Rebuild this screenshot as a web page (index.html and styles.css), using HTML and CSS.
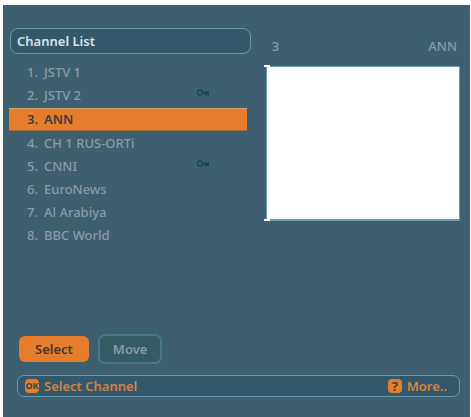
FILE: index.html
```
<!DOCTYPE html>
<html lang="en">
<head>
    <meta charset="UTF-8">
    <meta name="viewport" content="width=device-width, initial-scale=1.0">
    <title>Channel List</title>
    <link rel="stylesheet" href="styles.css">
</head>
<body>
    <div class="screen">
        <main class="content">
            <section class="channels">
                <h1 class="title">Channel List</h1>
                <ul class="channel-list">
                    <li class="channel"><span class="number">1.</span>JSTV 1</li>
                    <li class="channel"><span class="number">2.</span>JSTV 2
                        <svg class="key" viewBox="0 0 12 8" role="img" aria-label="Locked">
                            <rect x="1" y="1" width="4" height="5" rx="1" fill="none" stroke="currentColor" stroke-width="1.5"/>
                            <path d="M5.5 2.5H12V6.5H10.5V5.5H9.5V6.5H8V4.8H5.5Z" fill="currentColor"/>
                        </svg>
                    </li>
                    <li class="channel selected"><span class="number">3.</span>ANN</li>
                    <li class="channel"><span class="number">4.</span>CH 1 RUS-ORTi</li>
                    <li class="channel"><span class="number">5.</span>CNNI
                        <svg class="key" viewBox="0 0 12 8" role="img" aria-label="Locked">
                            <rect x="1" y="1" width="4" height="5" rx="1" fill="none" stroke="currentColor" stroke-width="1.5"/>
                            <path d="M5.5 2.5H12V6.5H10.5V5.5H9.5V6.5H8V4.8H5.5Z" fill="currentColor"/>
                        </svg>
                    </li>
                    <li class="channel"><span class="number">6.</span>EuroNews</li>
                    <li class="channel"><span class="number">7.</span>Al Arabiya</li>
                    <li class="channel"><span class="number">8.</span>BBC World</li>
                </ul>
            </section>
            <section class="preview">
                <div class="preview-info">
                    <span>3</span>
                    <span>ANN</span>
                </div>
                <div class="preview-picture"></div>
            </section>
        </main>
        <div class="actions">
            <button class="button primary" type="button">Select</button>
            <button class="button" type="button">Move</button>
        </div>
        <footer class="help">
            <span class="hint">
                <span class="badge">OK</span>
                Select Channel
            </span>
            <span class="hint">
                <span class="badge question">?</span>
                More..
            </span>
        </footer>
    </div>
</body>
</html>
```
FILE: styles.css
```
* {
    box-sizing: border-box;
}
body {
    margin: 0;
    background: white;
    color: #899ba6;
    font-family: "Noto Sans", "Open Sans", sans-serif;
    font-size: 13px;
    font-weight: 500;
    line-height: 22px;
}
.screen {
    display: flex;
    flex-direction: column;
    min-height: calc(100vh - 5px);
    margin: 5px 1px 0 3px;
    padding: 23px 10px 20px 6px;
    background: #3d5f70;
}
.content {
    display: grid;
    grid-template-columns: 5fr 4fr;
    gap: 14px;
}
.title {
    margin: 0 1px 7px;
    padding: 1px 6px 0;
    border: 1px solid #6899ad;
    border-radius: 8px;
    background: #33586b;
    color: #d5e3e8;
    font-size: 13px;
    font-weight: 600;
    line-height: 23px;
}
.channel-list {
    margin: 0;
    padding: 0;
    list-style: none;
}
.channel {
    display: flex;
    align-items: center;
    height: 23px;
    margin-right: 5px;
    padding: 0 38px 1px 18px;
}
.channel.selected {
    margin-bottom: 1px;
    margin-top: 1px;
    border-top: 1px solid #d49a6c;
    border-bottom: 1px solid #a9683a;
    background: #e57d2c;
    color: #383e46;
    font-weight: 600;
}
.number {
    width: 17px;
}
.key {
    width: 12px;
    height: 8px;
    margin: 0 0 4px auto;
    color: #124c48;
}
.preview {
    padding-top: 7px;
}
.preview-info {
    display: flex;
    justify-content: space-between;
    margin-bottom: 9px;
    padding: 0 3px 0 6px;
}
.preview-picture {
    position: relative;
    height: 155px;
    border: solid #6a9ead;
    border-width: 1px 1px 2px;
    background: white;
}
/* white ticks on the left corners */
.preview-picture::before,
.preview-picture::after {
    content: '';
    position: absolute;
    left: -3px;
    width: 6px;
    height: 2px;
    background: white;
}
.preview-picture::before {
    top: -2px;
}
.preview-picture::after {
    bottom: -2px;
}
.actions {
    display: flex;
    align-items: center;
    gap: 9px;
    margin-top: auto;
    padding: 0 10px 11px;
}
.button {
    height: 30px;
    padding: 0 13px;
    border: 2px solid #477886;
    border-radius: 7px;
    background: #355b64;
    color: #899ba6;
    font: inherit;
    font-weight: 600;
    cursor: pointer;
}
.button.primary {
    height: 26px;
    padding: 0 16px;
    border: none;
    border-radius: 6px;
    background: #e57d2c;
    color: #49352b;
}
.help {
    display: flex;
    justify-content: space-between;
    height: 22px;
    margin-left: 8px;
    padding: 0 12px 0 7px;
    border: 1px solid #6899ad;
    border-radius: 7px;
    background: #33586b;
    color: #d5823e;
    font-weight: 600;
}
.hint {
    display: flex;
    align-items: center;
    gap: 5px;
}
.badge {
    width: 14px;
    height: 14px;
    border-radius: 4px;
    background: #e57d2c;
    color: #3b4248;
    font-size: 9px;
    font-weight: 700;
    line-height: 14px;
    text-align: center;
}
.badge.question {
    font-size: 13px;
}
```
